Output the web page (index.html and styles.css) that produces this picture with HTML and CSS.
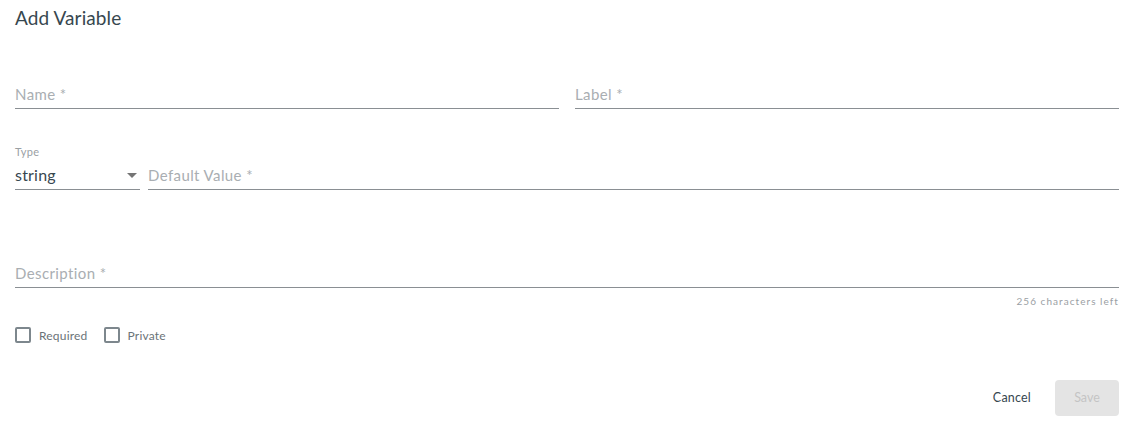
FILE: index.html
```html
<!DOCTYPE html>
<html>
<head>
<meta charset="utf-8">
<link rel="stylesheet" href="styles.css">
</head>
<body>
<div class="dialog">
  <h1 class="title">Add Variable</h1>
  <div class="row row-1">
    <div class="field grow"><span class="placeholder">Name *</span></div>
    <div class="field grow"><span class="placeholder">Label *</span></div>
  </div>
  <div class="row row-2">
    <div class="select">
      <span class="select-label">Type</span>
      <div class="select-control">
        <span class="select-value">string</span>
        <svg class="arrow" width="10" height="5" viewBox="0 0 10 5"><path d="M0 0 L10 0 L5 5 Z" fill="#757575"/></svg>
      </div>
    </div>
    <div class="field grow"><span class="placeholder">Default Value *</span></div>
  </div>
  <div class="row row-3">
    <div class="field grow"><span class="placeholder">Description *</span></div>
  </div>
  <div class="hint">256 characters left</div>
  <div class="checks">
    <label class="check"><span class="box"></span><span class="check-text">Required</span></label>
    <label class="check"><span class="box"></span><span class="check-text">Private</span></label>
  </div>
  <div class="actions">
    <button class="btn btn-text">Cancel</button>
    <button class="btn btn-disabled">Save</button>
  </div>
</div>
</body>
</html>
```

FILE: styles.css
```css
html, body {
  margin: 0;
  padding: 0;
  background: #ffffff;
}
body {
  font-family: Lato, "Noto Sans", sans-serif;
  color: #37474f;
}
.dialog {
  padding: 5px 12px 0 15px;
}
.title {
  margin: 0;
  font-size: 19px;
  font-weight: 400;
  line-height: 26px;
  letter-spacing: 0.1px;
  color: #37474f;
}
.row {
  display: flex;
  gap: 16px;
}
.row-1 {
  margin-top: 53px;
}
.row-2 {
  margin-top: 37px;
  gap: 8px;
  align-items: flex-end;
}
.row-3 {
  margin-top: 73px;
}
.grow {
  flex: 1;
}
.field {
  border-bottom: 1px solid #8a8f93;
  line-height: 20px;
  padding-bottom: 4px;
}
.placeholder {
  font-size: 15px;
  color: #a9aeb2;
  letter-spacing: 0.4px;
}
.select {
  width: 125px;
  display: flex;
  flex-direction: column;
}
.select-label {
  font-size: 11px;
  color: #9aa0a4;
  line-height: 12px;
  letter-spacing: 0.3px;
}
.select-control {
  border-bottom: 1px solid #8a8f93;
  line-height: 20px;
  padding-bottom: 4px;
  margin-top: 7px;
  display: flex;
  align-items: center;
  justify-content: space-between;
}
.select-value {
  font-size: 16px;
  color: #37474f;
  letter-spacing: 0.2px;
}
.arrow {
  margin-right: 3px;
}
.hint {
  text-align: right;
  font-size: 10px;
  color: #9aa0a4;
  letter-spacing: 1.05px;
  margin-top: 7px;
  line-height: 12px;
}
.checks {
  display: flex;
  gap: 16px;
  margin-top: 20px;
}
.check {
  display: flex;
  align-items: center;
  gap: 8px;
}
.box {
  width: 12px;
  height: 12px;
  border: 2px solid #7d878d;
  border-radius: 2px;
}
.check-text {
  font-size: 12px;
  color: #6b7378;
  letter-spacing: 0.2px;
}
.actions {
  display: flex;
  justify-content: flex-end;
  align-items: center;
  gap: 8px;
  margin-top: 37px;
}
.btn {
  font-family: inherit;
  font-size: 12.5px;
  border: none;
  border-radius: 4px;
  height: 36px;
  padding: 0 16px 1px;
  background: transparent;
}
.btn-text {
  color: #37474f;
  letter-spacing: 0.2px;
}
.btn-disabled {
  background: #e4e4e4;
  color: #c4c4c4;
  width: 64px;
}
```
